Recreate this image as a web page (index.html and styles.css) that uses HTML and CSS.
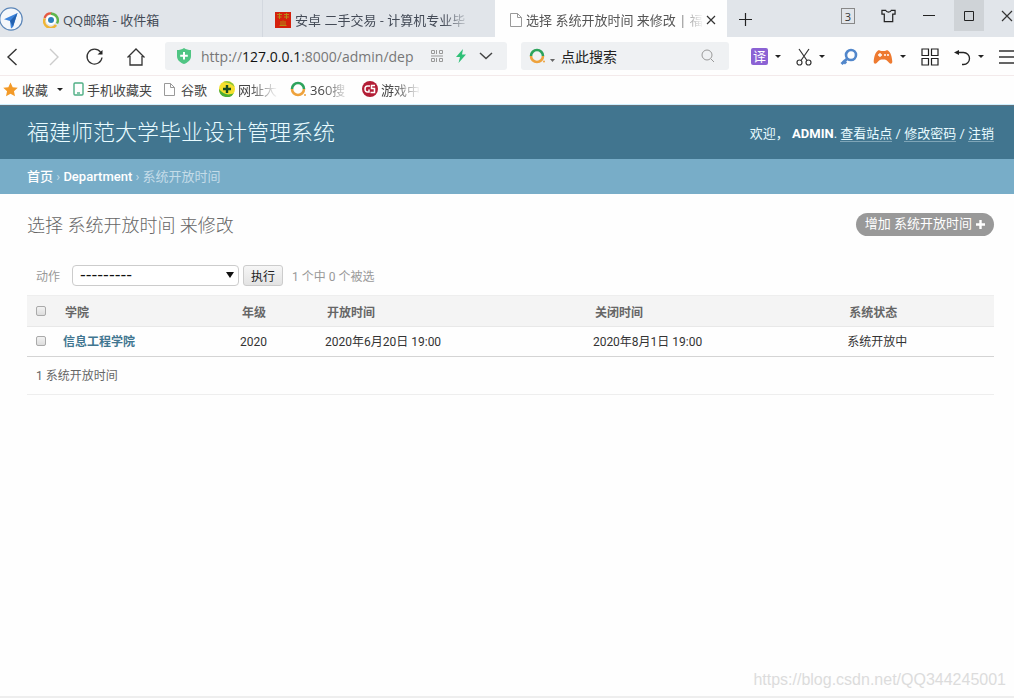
FILE: index.html
```html
<!DOCTYPE html>
<html lang="zh-CN">
<head>
<meta charset="utf-8">
<title>选择 系统开放时间 来修改 | 福建师范大学毕业设计管理系统</title>
<link rel="stylesheet" href="styles.css">
</head>
<body>
<div class="browser">
  <div class="tabbar">
    <button class="brand" aria-label="浏览器">
      <svg width="24" height="24" viewBox="0 0 24 24"><circle cx="11" cy="12" r="11.2" fill="#f4f7fb" stroke="#5c86b8" stroke-width="1.2"/><path d="M17.5 6 4 12.200l6 1.800 1 7.500 2-1.500z" fill="#3d84dc"/><path d="M17.500 6 10 14l3 5.500z" fill="#2461ae"/></svg>
    </button>
    <div class="tab tab-first">
      <svg width="16" height="16" viewBox="0 0 16 16"><circle cx="8" cy="8" r="5" fill="#fff"/><path d="M1.500 6A7 7 0 0 1 9 1.500" fill="none" stroke="#e6583f" stroke-width="2.200"/><path d="M8 1.800A6.500 6.500 0 0 1 14 11.500" fill="none" stroke="#61b64c" stroke-width="2.400"/><path d="M1.800 6.500A6.500 6.500 0 0 0 13 13" fill="none" stroke="#efb536" stroke-width="2.600"/><circle cx="8" cy="8" r="3" fill="#2a7fbd"/></svg>
      <span class="tab-title">QQ邮箱 - 收件箱</span>
    </div>
    <div class="tab tab-second">
      <svg width="16" height="16" viewBox="0 0 16 16"><rect width="16" height="16" fill="#d5200c"/><path d="M2 2.500h5M2.500 5h4M4.500 1v6M9 2.500h5M9 5h5M11.500 1v6M6 9v4M10 9v4M8 8.500v4.500M4.500 13.500h7" stroke="#b58b16" fill="none"/></svg>
      <span class="tab-title fade">安卓 二手交易 - 计算机专业毕</span>
    </div>
    <div class="tab tab-active">
      <svg width="12" height="14" viewBox="0 0 12 14" fill="none" stroke="#999"><path d="M.5.500h7l4 4v9H.5zM7.500.500v4h4"/></svg>
      <span class="tab-title fade">选择 系统开放时间 来修改 | 福</span>
      <button class="tab-close" aria-label="关闭标签"><svg width="10" height="10" viewBox="0 0 10 10" stroke="#333" stroke-width="1.200"><path d="M1 1l8 8M9 1 1 9"/></svg></button>
    </div>
    <button class="new-tab" aria-label="新标签"><svg width="15" height="15" viewBox="0 0 15 15" stroke="#222" stroke-width="1.200"><path d="M7.500 1v13M1 7.500h13"/></svg></button>
    <div class="window-controls">
      <button class="count">3</button>
      <button class="win win-skin" aria-label="皮肤"><svg width="15" height="14" viewBox="0 0 16 14" fill="none" stroke="#222" stroke-width="1.300"><path d="M5 1H1v4h2.500v8h9V5H15V1h-4C10 3.500 6 3.500 5 1z"/></svg></button>
      <button class="win" aria-label="最小化"><svg width="12" height="12" viewBox="0 0 12 12" stroke="#222"><path d="M0 5.500h12"/></svg></button>
      <button class="win win-max" aria-label="最大化"><svg width="10" height="10" viewBox="0 0 10 10" fill="none" stroke="#222"><path d="M.5.500h9v9h-9z"/></svg></button>
      <button class="win win-close" aria-label="关闭"><svg width="12" height="12" viewBox="0 0 12 12" stroke="#333" stroke-width="1.200"><path d="M1 1l10 10M11 1 1 11"/></svg></button>
    </div>
  </div>

  <div class="toolbar">
    <div class="nav">
      <button aria-label="后退"><svg width="20" height="20" viewBox="0 0 20 20" fill="none" stroke="#333" stroke-width="1.400"><path d="M13.500 2 5 10l8.500 8"/></svg></button>
      <button aria-label="前进"><svg width="20" height="20" viewBox="0 0 20 20" fill="none" stroke="#ccc" stroke-width="1.400"><path d="M6 2l8 8-8 8"/></svg></button>
      <button aria-label="刷新"><svg width="20" height="20" viewBox="0 0 20 20" fill="none" stroke="#333" stroke-width="1.300"><path d="M15.500 5A7.500 7.500 0 1 0 17 10.500"/><path d="M17.500 3v4.500h-5z" fill="#222" stroke="none"/></svg></button>
      <button aria-label="主页"><svg width="20" height="20" viewBox="0 0 20 20" fill="none" stroke="#333" stroke-width="1.300"><path d="M1.500 10.500 10 2l8.500 8.500M4 9v9h12V9"/></svg></button>
    </div>
    <div class="address">
      <svg width="16" height="16" viewBox="0 0 16 16"><path d="M8 0c2 1.500 4.500 2 7 2v6c0 4-3 6.500-7 8-4-1.500-7-4-7-8V2c2.500 0 5-.5 7-2z" fill="#4fc583"/><path d="M8 4v7.500M4.200 7.800h7.600" stroke="#fff" stroke-width="2"/></svg>
      <div class="url"><span>http://</span><b>127.0.0.1</b><span>:8000/admin/dep</span></div>
      <button aria-label="二维码"><svg width="12" height="12" viewBox="0 0 12 12" fill="none" stroke="#999"><path d="M.5.500h3v3h-3zM5.500 0v4M8.500.500h3v3h-3zM.5 8.500h3v3h-3zM5.500 8v4M8.500 8.500h3v3h-3zM0 6h12"/></svg></button>
      <button aria-label="加速"><svg width="12" height="14" viewBox="0 0 12 14"><path d="M8 0 1 8h4l-1.500 6L11 5.500H7z" fill="#2fc077"/></svg></button>
      <button aria-label="展开"><svg width="14" height="8" viewBox="0 0 14 8" fill="none" stroke="#444" stroke-width="1.500"><path d="M1 1l6 5.500L13 1"/></svg></button>
    </div>
    <div class="search">
      <svg width="28" height="16" viewBox="0 0 28 16" fill="none"><path d="M2 8a6 6 0 0 1 12 0" stroke="#2da35c" stroke-width="2.600"/><path d="M14 8A6 6 0 0 1 2 8" stroke="#eea23c" stroke-width="2.600"/><circle cx="15" cy="13.500" r="1" fill="#eea23c"/><path d="M21 11h5l-2.500 3z" fill="#666"/></svg>
      <input type="text" placeholder="点此搜索" aria-label="搜索">
      <svg width="14" height="14" viewBox="0 0 14 14" fill="none" stroke="#999"><circle cx="6" cy="6" r="5"/><path d="M10 10l3 3"/></svg>
    </div>
    <div class="tools">
      <button class="split"><span class="translate">译</span><i class="caret"></i></button>
      <button class="split" aria-label="截图"><svg width="16" height="18" viewBox="0 0 16 18" fill="none" stroke="#333" stroke-width="1.200"><path d="M3 1l8 11.500M13 1 5 12.500"/><circle cx="3.500" cy="14.500" r="2.500"/><circle cx="12.500" cy="14.500" r="2.500"/></svg><i class="caret"></i></button>
      <button aria-label="查找"><svg width="18" height="18" viewBox="0 0 18 18" fill="none" stroke="#5287cb"><circle cx="11" cy="7" r="5" stroke-width="2.600"/><path d="M7.500 10.500 1.500 16M3 12.500l3 3" stroke-width="3"/></svg></button>
      <button class="split" aria-label="游戏"><svg width="20" height="16" viewBox="0 0 20 16"><path d="M5 1.500c1-.8 2 .5 5 .5s4-1.300 5-.5c3 2 4 7 4.300 11 .1 2.500-2.300 3-3.700.8C14 11 12.500 10.500 10 10.500S6 11 4.400 13.300C3 15.500.6 15 .7 12.500 1 8.500 2 3.500 5 1.500z" fill="#ee7a30"/><path d="M7 4v4M5 6h4" stroke="#fff" stroke-width="1.300"/><circle cx="12" cy="6" r="1" fill="#fff"/><circle cx="15" cy="6" r="1" fill="#fff"/></svg><i class="caret"></i></button>
      <button aria-label="应用"><svg width="18" height="18" viewBox="0 0 18 18" fill="none" stroke="#222" stroke-width="1.200"><path d="M1 1h6.500v6.500H1zM10.500 1H17v6.500h-6.500zM1 10.500h6.500V17H1zM10.500 10.500H17V17h-6.500z"/></svg></button>
      <button class="split" aria-label="恢复"><svg width="17" height="18" viewBox="0 0 17 18" fill="none" stroke="#222" stroke-width="1.300"><path d="M3 4.500h6.500a6 6 0 0 1 0 12H8"/><path d="M0 4.500 5 2v5z" fill="#222" stroke="none"/></svg><i class="caret"></i></button>
      <button aria-label="菜单"><svg width="16" height="16" viewBox="0 0 16 16" stroke="#333" stroke-width="1.300"><path d="M0 2h16M0 8h16M0 14h16"/></svg></button>
    </div>
  </div>

  <nav class="bookmarks" aria-label="收藏栏">
    <a href="#" class="bm-fav"><svg width="15" height="15" viewBox="0 0 16 16"><path d="M8 .5l2.300 5 5.400.6-4 3.700 1.100 5.400L8 12.500l-4.800 2.700 1.100-5.400-4-3.700 5.400-.6z" fill="#f39a28"/></svg>收藏<i class="caret"></i></a>
    <a href="#"><svg width="11" height="14" viewBox="0 0 11 14" fill="none" stroke="#4eae84" stroke-width="1.400"><rect x="1" y="1" width="9" height="12" rx="1"/><path d="M4 11h3"/></svg>手机收藏夹</a>
    <a href="#" class="bm-page"><svg width="11" height="13" viewBox="0 0 11 13" fill="none" stroke="#999"><path d="M.5.500h6l4 4v8H.5zM6.500.500v4h4"/></svg>谷歌</a>
    <a href="#"><svg width="16" height="16" viewBox="0 0 16 16"><circle cx="8" cy="8" r="8" fill="#f4df2c"/><path d="M0 8a8 8 0 0 0 15 4C9 15 4 13 0 8z" fill="#4cae36"/><path d="M4 1.200A8 8 0 0 1 15.500 6C12 2 8 1 4 1.200z" fill="#7cc23f"/><path d="M8 4v8M4 8h8" stroke="#164a20" stroke-width="2.400"/></svg><span class="fade short">网址大</span></a>
    <a href="#"><svg width="17" height="16" viewBox="0 0 17 16" fill="none"><path d="M2 8a6 6 0 0 1 12 0" stroke="#2da35c" stroke-width="2.600"/><path d="M14 8A6 6 0 0 1 2 8" stroke="#eea23c" stroke-width="2.600"/><circle cx="15" cy="14" r="1" fill="#eea23c"/></svg><span class="fade short">360搜</span></a>
    <a href="#"><svg width="16" height="16" viewBox="0 0 16 16" fill="none"><circle cx="8" cy="8" r="8" fill="#b31e36"/><path d="M8 5H5.500Q3 5 3 8t2.500 3H7V8.500M13 4.500H9.500V7.500H12.500V11.500H8.500" stroke="#fff" stroke-width="1.500"/></svg><span class="fade short">游戏中</span></a>
  </nav>
</div>

<header class="header">
  <h1>福建师范大学毕业设计管理系统</h1>
  <div class="user-tools">欢迎， <strong>ADMIN</strong>. <a href="#">查看站点</a> / <a href="#">修改密码</a> / <a href="#">注销</a></div>
</header>
<nav class="breadcrumbs" aria-label="面包屑"><a href="#">首页</a> › <a href="#">Department</a> › 系统开放时间</nav>

<main class="content">
  <div class="title-row">
    <h2>选择 系统开放时间 来修改</h2>
    <a class="add" href="#">增加 系统开放时间<svg width="9" height="9" viewBox="0 0 9 9" stroke="#fff" stroke-width="2.400"><path d="M4.500 0v9M0 4.500h9"/></svg></a>
  </div>
  <form class="changelist">
    <div class="actions">
      <label for="action">动作</label>
      <div class="select-wrap"><select id="action"><option>---------</option></select></div>
      <button type="button" class="go">执行</button>
      <span>1 个中 0 个被选</span>
    </div>
    <table>
      <colgroup><col class="c-check"><col class="c-college"><col class="c-grade"><col class="c-open"><col class="c-close"><col class="c-state"></colgroup>
      <thead>
        <tr><th><input type="checkbox" aria-label="全选"></th><th>学院</th><th>年级</th><th>开放时间</th><th>关闭时间</th><th>系统状态</th></tr>
      </thead>
      <tbody>
        <tr><td><input type="checkbox" aria-label="选择 信息工程学院"></td><td><a href="#">信息工程学院</a></td><td>2020</td><td>2020年6月20日 19:00</td><td>2020年8月1日 19:00</td><td>系统开放中</td></tr>
      </tbody>
    </table>
    <p class="paginator">1 系统开放时间</p>
  </form>
</main>
<footer class="watermark">https://blog.csdn.net/QQ344245001</footer>
</body>
</html>
```
FILE: styles.css
```css
* { box-sizing: border-box; }
body {
  margin: 0;
  min-height: 100vh;
  display: flex;
  flex-direction: column;
  overflow-x: hidden;
  background: #fefefe;
  color: #333;
  font-family: Roboto, "Noto Sans CJK SC", sans-serif;
  font-size: 12px;
}
button {
  display: flex;
  align-items: center;
  justify-content: center;
  padding: 0;
  border: 0;
  background: none;
  font: inherit;
  color: inherit;
}
svg { display: block; flex: none; }
a { color: inherit; text-decoration: none; }

/* Browser window */
.browser {
  overflow: hidden;
  font-family: "Open Sans", "Noto Sans CJK SC", sans-serif;
  font-size: 13px;
}
.tabbar { display: flex; height: 37px; background: #e1e5ea; }
.brand { width: 33px; justify-content: flex-start; }
.tab {
  display: flex;
  align-items: center;
  gap: 4px;
  flex: 0 1 232px;
  min-width: 0;
  padding: 2px 24px 0 12px;
  color: #444b57;
}
.tab-first { flex-basis: 230px; padding-left: 10px; border-right: 1px solid #d3d8df; }
.tab-title { flex: 1; overflow: hidden; white-space: nowrap; }
.fade {
  -webkit-mask-image: linear-gradient(to right, #000 calc(100% - 28px), transparent);
  mask-image: linear-gradient(to right, #000 calc(100% - 28px), transparent);
}
.tab-active { padding: 2px 10px 0 15px; background: #fefefe; color: #555; }
.tab-active .tab-title { margin-right: -4px; }
.tab-close { width: 12px; height: 12px; margin-left: 1px; }
.new-tab { width: 36px; padding-top: 2px; }
.window-controls { display: flex; align-items: flex-start; margin: 0 -8px 0 auto; }
.count {
  width: 14px;
  height: 16px;
  margin: 8px 19px 0 0;
  border: 1px solid #888;
  font-size: 11px;
}
.win { width: 41px; height: 31px; flex: none; }
.win-skin { width: 28px; margin-right: 6px; }
.win-max { width: 30px; margin-left: 5px; background: #cfd3d7; }
.win-close { width: 30px; margin-left: 8px; }

.toolbar {
  display: flex;
  align-items: center;
  height: 39px;
  border-bottom: 1px solid #f3eaeb;
  background: #fefefe;
}
.nav { display: flex; gap: 21px; width: 165px; padding: 1px 0 0 3px; }
.address, .search {
  display: flex;
  align-items: center;
  height: 28px;
  border-radius: 3px;
  background: #eff1f3;
}
.address { flex: 1; min-width: 0; gap: 12px; padding: 0 14px 0 11px; }
.url {
  flex: 1;
  min-width: 0;
  margin-left: -3px;
  overflow: hidden;
  white-space: nowrap;
  color: #777;
  font-size: 14px;
}
.url b { color: #111; font-weight: 400; }
.search { width: 208px; margin: 0 22px 0 14px; padding: 0 14px 0 8px; gap: 4px; }
.search input {
  flex: 1;
  min-width: 0;
  padding: 0;
  border: 0;
  background: none;
  font: inherit;
  font-size: 14px;
}
.search input::placeholder { color: #222; opacity: 1; }
.tools { display: flex; align-items: center; gap: 15px; width: 263px; padding-top: 1px; }
.split { gap: 7px; }
.translate {
  width: 17px;
  height: 17px;
  border-radius: 2px;
  background: #8b62d4;
  color: #fff;
  line-height: 16px;
}
.caret {
  width: 0;
  border: 3px solid transparent;
  border-top-color: #222;
  border-bottom: 0;
}

.bookmarks {
  display: flex;
  align-items: center;
  gap: 12px;
  height: 29px;
  padding: 0 0 2px 3px;
  border-bottom: 1px solid #ccefff;
  background: #fefefe;
  color: #444;
}
.bookmarks a { display: flex; align-items: center; gap: 3px; white-space: nowrap; }
.bookmarks .bm-fav { gap: 4px; margin-right: -2px; }
.bm-fav .caret { margin-left: 5px; }
.bookmarks .bm-page { gap: 6px; }
.short { width: 40px; overflow: hidden; }

/* Admin site */
.header {
  display: flex;
  align-items: center;
  justify-content: space-between;
  height: 54px;
  padding: 0 20px 0 27px;
  border-top: 1px solid #60717c;
  background: #41758f;
  color: #e8fbff;
}
.header h1 { margin: 0; font-size: 22px; font-weight: 300; line-height: 30px; }
.user-tools { font-size: 13px; }
.user-tools strong { color: #fff; }
.user-tools a { border-bottom: 1px solid #7fa5b7; }
.breadcrumbs {
  height: 35px;
  padding: 0 27px;
  background: #78adc8;
  color: #c4dce8;
  font-size: 13px;
  line-height: 35px;
}
.breadcrumbs a { color: #fff; font-weight: 500; }
.content { flex: 1; padding: 15px 20px 0 27px; }
.title-row { display: flex; align-items: center; justify-content: space-between; height: 30px; }
.title-row h2 { margin: 0; color: #666; font-size: 18px; font-weight: 300; }
.add {
  display: flex;
  align-items: center;
  gap: 4px;
  height: 23px;
  padding: 0 9px;
  border-radius: 12px;
  background: #999;
  color: #fff;
  font-size: 13px;
  line-height: 20px;
}
.changelist { padding-top: 25px; }
.actions { display: flex; align-items: center; height: 22px; padding-left: 9px; color: #999; }
.actions label { margin-right: 12px; }
.select-wrap { position: relative; width: 167px; height: 21px; margin-right: 4px; }
.select-wrap::after {
  content: "";
  position: absolute;
  top: 7px;
  right: 5px;
  border: 4px solid transparent;
  border-top: 6px solid #111;
  border-bottom: 0;
  pointer-events: none;
}
.select-wrap select {
  width: 100%;
  height: 21px;
  padding: 0 7px;
  appearance: none;
  border: 1px solid #ccc;
  border-radius: 4px;
  background: #fff;
  color: #111;
  font: 16px/18px "DejaVu Sans", sans-serif;
}
.go {
  width: 40px;
  height: 21px;
  margin-right: 9px;
  border: 1px solid #ccc;
  border-radius: 3px;
  background: linear-gradient(#f6f6f6, #e3e3e3);
  color: #222;
}
table { width: 100%; margin-top: 9px; border-collapse: collapse; table-layout: fixed; }
.c-check { width: 28px; }
.c-college { width: 18.3%; }
.c-grade { width: 8.8%; }
.c-open { width: 27.7%; }
.c-close { width: 26.3%; }
th, td { height: 31px; padding: 0 8px; text-align: left; line-height: 16px; }
th {
  padding: 3px 10px 0;
  border-top: 1px solid #eee;
  border-bottom: 1px solid #e8e8e8;
  background: #f4f4f4;
  color: #666;
  font-weight: 700;
}
td { height: 30px; padding-top: 1px; border-bottom: 1px solid #d4d4d4; }
th:first-child, td:first-child { padding: 0 0 0 9px; }
td:first-child { padding-bottom: 2px; }
td a { color: #417690; font-weight: 700; }
input[type="checkbox"] {
  display: block;
  width: 10px;
  height: 10px;
  margin: 0;
  appearance: none;
  border: 1px solid #aaa;
  border-radius: 2px;
  background: linear-gradient(#f2f2f2, #ddd);
}
.paginator {
  height: 38px;
  margin: 0;
  padding-left: 9px;
  border-bottom: 1px solid #eee;
  color: #666;
  line-height: 38px;
}
.watermark {
  padding: 0 8px 6px;
  border-bottom: 2px solid #eee;
  color: #dcdcdc;
  font: 16px/20px "Liberation Sans", sans-serif;
  text-align: right;
}
```
